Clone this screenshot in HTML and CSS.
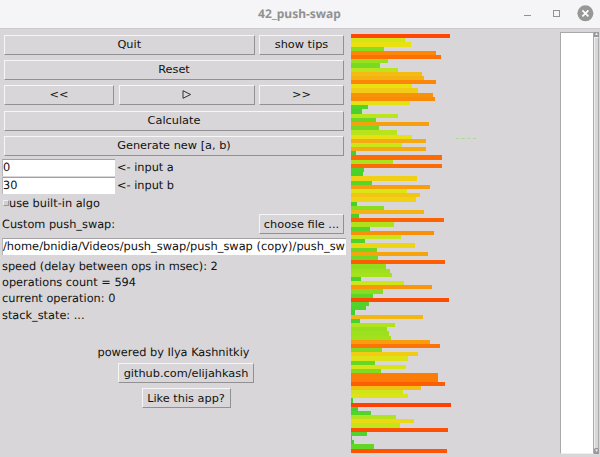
FILE: index.html
```html
<!DOCTYPE html>
<html lang="en">
<head>
<meta charset="utf-8">
<title>42_push-swap</title>
<link rel="stylesheet" href="styles.css">
</head>
<body>
<header class="titlebar">
  <h1 class="title">42_push-swap</h1>
  <svg class="window-controls" width="80" height="28" viewBox="0 0 80 28">
    <path d="M4 15.5h7" stroke="#929292"/>
    <rect x="33.5" y="10.5" width="6" height="6" fill="none" stroke="#929292"/>
    <circle cx="65.4" cy="13.3" r="8" fill="#979797"/>
    <path d="M62.4 10.3l6 6M68.4 10.3l-6 6" stroke="#fff" stroke-width="1.7"/>
  </svg>
</header>
<main class="app">
  <section class="controls">
    <div class="buttons">
      <button class="btn two">Quit</button>
      <button class="btn">show tips</button>
      <button class="btn three">Reset</button>
      <button class="btn">&lt;&lt;</button>
      <button class="btn" aria-label="Play"><svg width="10" height="10" viewBox="0 0 10 10"><path d="M1 1.7v7.6L8.6 5.5z" fill="none" stroke="#222" stroke-width=".9"/></svg></button>
      <button class="btn">&gt;&gt;</button>
      <button class="btn three">Calculate</button>
      <button class="btn three">Generate new [a, b)</button>
    </div>
    <div class="field"><span class="entry">0</span><span>&lt;- input a</span></div>
    <div class="field"><span class="entry">30</span><span>&lt;- input b</span></div>
    <div class="check"><span class="box"></span><span>use built-in algo</span></div>
    <div class="file"><span>Custom push_swap:</span><button class="btn choose">choose file ...</button></div>
    <div class="entry path">/home/bnidia/Videos/push_swap/push_swap (copy)/push_sw</div>
    <div class="status">
      <div>speed (delay between ops in msec): 2</div>
      <div>operations count = 594</div>
      <div>current operation: 0</div>
      <div>stack_state: ...</div>
    </div>
    <div class="credit">powered by Ilya Kashnitkiy</div>
    <div class="links">
      <button class="btn github">github.com/elijahkash</button>
      <button class="btn like">Like this app?</button>
    </div>
  </section>
  <section class="stack" id="stack"></section>
  <section class="stack-b"><div class="trace"></div></section>
  <section class="log">
    <div class="list"></div>
    <div class="scrollbar"><span class="arrow">▴</span><span class="thumb"></span><span class="arrow">▾</span></div>
  </section>
</main>
<script src="script.js"></script>
</body>
</html>
```
FILE: styles.css
```css
* { box-sizing: border-box; }
body {
  margin: 0;
  width: 600px;
  height: 457px;
  overflow: hidden;
  background: #d8d6d8;
  color: #111;
  font: 11.32px/16px "DejaVu Sans", sans-serif;
  text-rendering: geometricPrecision;
}
.titlebar {
  height: 29px;
  display: grid;
  grid-template-columns: 79px 1fr 80px;
  background: #f5f4f6;
  border-bottom: 1px solid #cbc9cb;
}
.title {
  grid-column: 2;
  margin: 0;
  text-align: center;
  font: bold 12px/28px "Noto Sans", sans-serif;
  color: #919191;
}
.app { display: flex; height: 428px; }
.controls { width: 351px; padding-top: 6px; white-space: nowrap; }
.buttons {
  display: grid;
  grid-template-columns: 110px 136px 85px;
  grid-auto-rows: 20px;
  gap: 5.2px 4.5px;
  margin-left: 4px;
}
.btn {
  display: flex;
  align-items: center;
  justify-content: center;
  height: 20px;
  padding: 0 0 2px;
  font: inherit;
  color: inherit;
  background: #d8d6d8;
  border: 1px solid;
  border-color: #f6f6f6 #929092 #929092 #f6f6f6;
  border-radius: 0;
}
.two { grid-column: span 2; }
.three { grid-column: span 3; }
.buttons + .field { margin-top: 3px; }
.field { display: flex; gap: 2px; height: 18px; margin-left: 2px; line-height: 17px; }
.entry {
  width: 113px;
  height: 17px;
  padding-left: 0;
  line-height: 14px;
  background: #fff;
  border-top: 1px solid #a3a1a3;
  border-left: 1px solid #b8b6b8;
}
.check { display: flex; align-items: center; height: 17px; margin-left: 3px; line-height: 17px; }
.box {
  width: 6px;
  height: 6px;
  background: #d0ced0;
  border: 1px solid;
  border-color: #eee #999 #999 #eee;
}
.file { display: flex; justify-content: space-between; align-items: center; height: 25px; margin: 0 7px 0 2px; }
.choose { width: 85px; padding-bottom: 1px; }
.path { width: 344px; margin: 1px 0 0 2px; font-size: 11.4px; }
.status { margin: 3px 0 0 2px; line-height: 16.3px; }
.credit { margin-top: 21px; width: 347px; text-align: center; }
.links { display: flex; flex-direction: column; align-items: center; gap: 5px; width: 372px; margin-top: 3px; }
.links .btn { padding: 1px 0 0; }
.github { width: 136px; }
.like { width: 89px; }
.stack { width: 105px; padding-top: 5px; }
.bar { height: 4.19px; }
.stack-b { width: 104px; padding-top: 109px; }
.trace { width: 20px; border-top: 1px dashed #a5dc92; }
.log { display: flex; width: 39px; height: 422px; margin-top: 3px; }
.list { width: 34px; background: #fff; border: 1px solid #aaa8aa; border-bottom-color: #eee; }
.scrollbar { display: flex; flex-direction: column; width: 5px; background: #bcbabc; }
.thumb { flex: 1; background: #d8d6d8; border: 1px solid; border-color: #eee #aaa #999 #eee; }
.arrow { height: 5px; font-size: 5px; line-height: 5px; text-align: center; color: #f4f4f4; background: #999; }
```
FILE: script.js
```js
const values = [
  99, 54, 60, 33, 85, 90, 37, 29, 47, 71, 73, 85, 61, 67, 82, 84, 59, 17, 11, 47,
  25, 78, 28, 46, 61, 75, 51, 75, 5, 91, 42, 91, 13, 12, 66, 21, 79, 56, 69, 65,
  6, 33, 73, 8, 93, 43, 19, 83, 50, 14, 64, 26, 77, 27, 94, 35, 39, 41, 10, 53,
  81, 32, 22, 98, 18, 15, 4, 72, 9, 44, 36, 38, 40, 79, 89, 31, 67, 57, 24, 55,
  30, 87, 87, 94, 70, 52, 57, 2, 100, 7, 20, 45, 63, 49, 97, 16, 1, 3, 23, 96
];
const stops = [
  [0, 60, 205, 50], [20, 85, 212, 40], [35, 145, 222, 30], [50, 198, 230, 28],
  [60, 232, 226, 18], [68, 242, 200, 20], [75, 244, 170, 18], [83, 250, 143, 10],
  [90, 252, 112, 4], [100, 255, 66, 2]
];
function colour(v) {
  const i = Math.max(1, stops.findIndex(s => s[0] >= v));
  const a = stops[i - 1], b = stops[i], t = (v - a[0]) / (b[0] - a[0]);
  return "rgb(" + [1, 2, 3].map(k => Math.round(a[k] + (b[k] - a[k]) * t)).join(",") + ")";
}
const stack = document.getElementById("stack");
values.forEach(v => {
  const bar = document.createElement("div");
  bar.className = "bar";
  bar.style.width = v + "px";
  bar.style.background = colour(v);
  stack.appendChild(bar);
});
```
